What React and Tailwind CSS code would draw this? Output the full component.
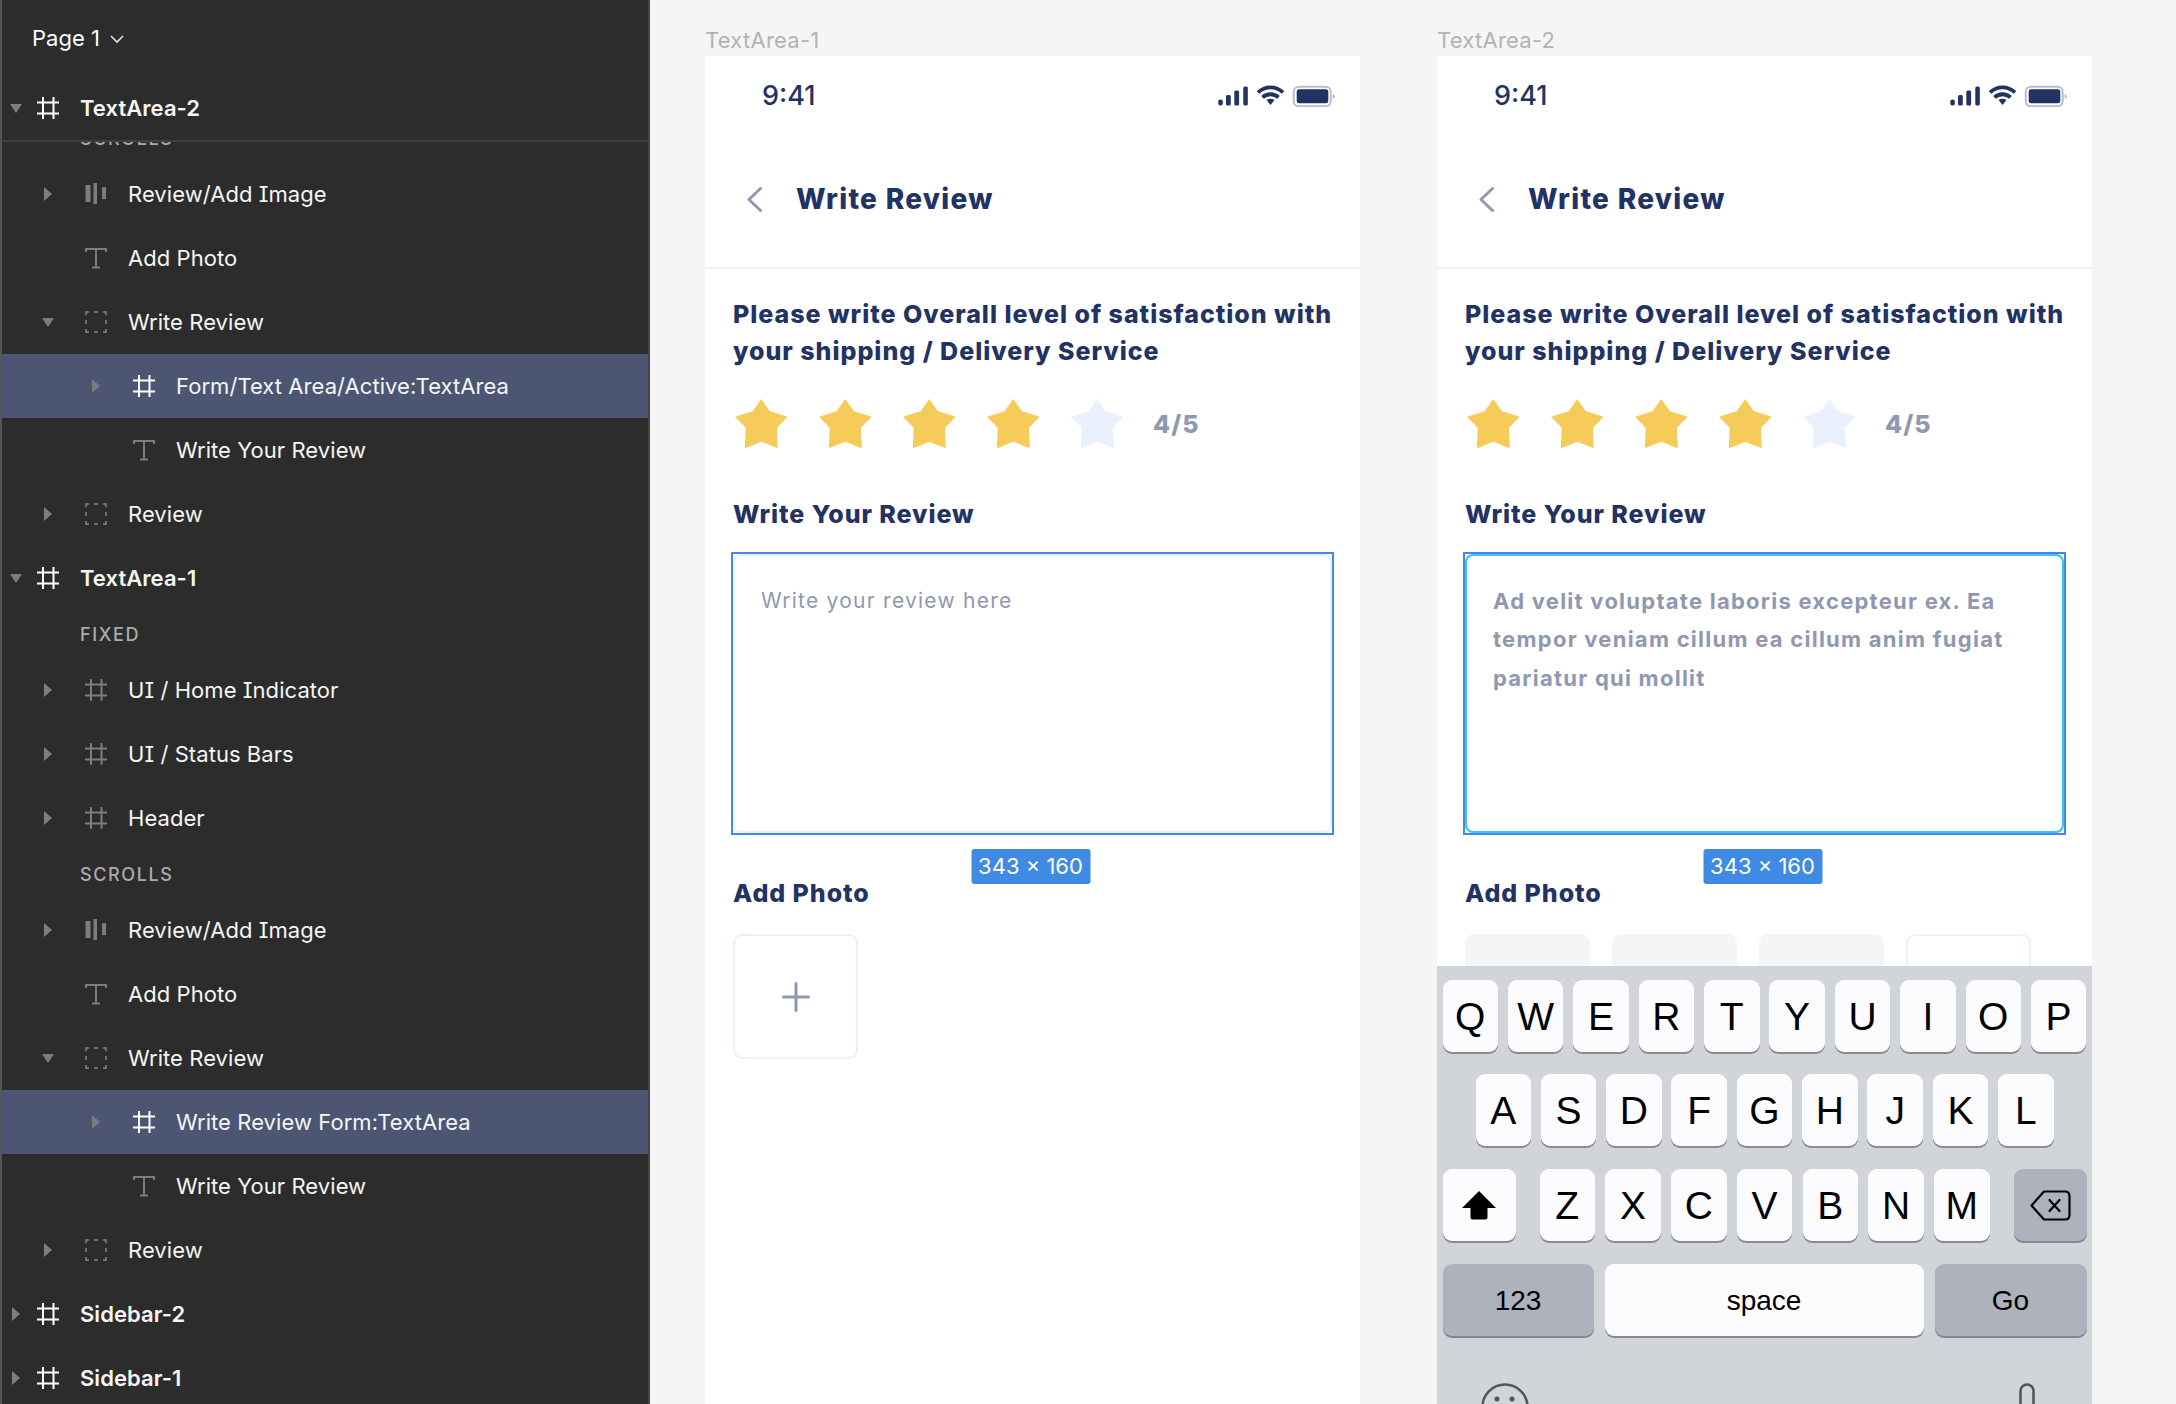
import React from "react";

const inter = "[font-family:Inter,'Noto_Sans',sans-serif]";

function Arrow({ dir }) {
  if (dir === "down")
    return (
      <svg width="12" height="9" viewBox="0 0 12 9" className="text-[#7d7d7d]">
        <path d="M0 0H12L6 9Z" fill="currentColor" />
      </svg>
    );
  if (dir === "right")
    return (
      <svg width="8" height="14" viewBox="0 0 8 14" className="text-[#7d7d7d]">
        <path d="M0 0L8 7L0 14Z" fill="currentColor" />
      </svg>
    );
  return null;
}

function Icon({ type, className }) {
  if (type === "hash")
    return (
      <svg width="22" height="24" viewBox="0 0 22 24" fill="none" stroke="currentColor" strokeWidth="2" className={className}>
        <path d="M6 1V23M16.500 1V23M0 6.500H22M0 17.500H22" />
      </svg>
    );
  if (type === "text")
    return (
      <svg width="22" height="22" viewBox="0 0 22 22" fill="none" stroke="currentColor" strokeWidth="2" className={className}>
        <path d="M1 5V2H21V5M11 2V20M7 20.500H15" />
      </svg>
    );
  if (type === "group")
    return (
      <svg width="22" height="22" viewBox="0 0 22 22" fill="none" stroke="#6e6e6e" strokeWidth="2" className={className}>
        <path d="M1 4V1H4M9 1H13M18 1H21V4M21 9V13M21 18V21H18M13 21H9M4 21H1V18M1 13V9" />
      </svg>
    );
  return (
    <svg width="22" height="22" viewBox="0 0 22 22" fill="currentColor" className={className}>
      <rect x="0.500" y="2" width="5" height="17" />
      <rect x="8.500" y="0" width="3.500" height="21" />
      <rect x="17" y="4" width="4" height="12" />
    </svg>
  );
}

function Row({ level, arrow, icon, label, selected, bold }) {
  const indent = level === 0 ? "w-[28px]" : level === 1 ? "ml-[30px] w-[32px]" : "ml-[78px] w-[32px]";
  const iconGap = level === 0 ? "ml-[7px]" : "ml-[21px]";
  const iconColor = selected || level === 0 ? "text-white" : "text-[#7d7d7d]";
  return (
    <div className={`flex h-[64px] shrink-0 items-center ${selected ? "bg-[#4c5672]" : ""}`}>
      <div className={`flex shrink-0 items-center justify-center ${indent}`}>
        <Arrow dir={arrow} />
      </div>
      <Icon type={icon} className={`shrink-0 ${iconGap} ${iconColor}`} />
      <span className={`ml-[21px] whitespace-nowrap text-[22px] tracking-[0.06px] text-[#f5f5f5] [font-feature-settings:'cv08'] ${bold ? "font-semibold" : "font-normal"}`}>
        {label}
      </span>
    </div>
  );
}

function SectionLabel({ children }) {
  return (
    <div className="flex h-[48px] shrink-0 items-center pl-[78px] text-[18px] font-medium tracking-[1.6px] text-[#ababab]">
      {children}
    </div>
  );
}

function ArtboardRows({ selectedName }) {
  return (
    <>
      <Row level={1} arrow="right" icon="auto" label="Review/Add Image" />
      <Row level={1} icon="text" label="Add Photo" />
      <Row level={1} arrow="down" icon="group" label="Write Review" />
      <Row level={2} arrow="right" icon="hash" label={selectedName} selected />
      <Row level={2} icon="text" label="Write Your Review" />
      <Row level={1} arrow="right" icon="group" label="Review" />
    </>
  );
}

function Sidebar() {
  return (
    <aside className={`flex h-full w-[650px] shrink-0 flex-col border-x-2 border-l-[#555555] border-r-[#444444] bg-[#2c2c2c] ${inter}`}>
      <div className="flex h-[76px] shrink-0 items-center pl-[30px] text-[22px] text-white">
        Page 1
        <svg width="14" height="9" viewBox="0 0 14 9" fill="none" stroke="#e0e0e0" strokeWidth="1.600" className="ml-[10px] mt-[2px]">
          <path d="M1 1L7 7L13 1" />
        </svg>
      </div>
      <div className="shrink-0 border-b-2 border-[#3f3f3f]">
        <Row level={0} arrow="down" icon="hash" label="TextArea-2" bold />
      </div>
      <div className="flex min-h-0 flex-1 flex-col overflow-hidden">
        <div className="-mt-[28px] shrink-0">
          <SectionLabel>SCROLLS</SectionLabel>
        </div>
        <ArtboardRows selectedName="Form/Text Area/Active:TextArea" />
        <Row level={0} arrow="down" icon="hash" label="TextArea-1" bold />
        <SectionLabel>FIXED</SectionLabel>
        <Row level={1} arrow="right" icon="hash" label="UI / Home Indicator" />
        <Row level={1} arrow="right" icon="hash" label="UI / Status Bars" />
        <Row level={1} arrow="right" icon="hash" label="Header" />
        <SectionLabel>SCROLLS</SectionLabel>
        <ArtboardRows selectedName="Write Review Form:TextArea" />
        <Row level={0} arrow="right" icon="hash" label="Sidebar-2" bold />
        <Row level={0} arrow="right" icon="hash" label="Sidebar-1" bold />
      </div>
    </aside>
  );
}

function StatusIcons() {
  return (
    <svg width="117" height="22" viewBox="0 0 117 22" fill="none">
      <g fill="#223263">
        <rect x="0.300" y="14.500" width="4.500" height="6" rx="2" />
        <rect x="8" y="10" width="4.800" height="10.500" rx="1.500" />
        <rect x="16.300" y="5.500" width="4.800" height="15" rx="1.500" />
        <rect x="25.300" y="1.500" width="4.500" height="19" rx="1.500" />
        <path d="M48.500 15Q52.500 12.500 56.500 15L52.500 20Z" />
      </g>
      <g stroke="#223263" strokeWidth="3.800">
        <path d="M40 7.500A18 18 0 0 1 65 7.500" />
        <path d="M44.500 12.300A12 12 0 0 1 60.500 12.300" />
      </g>
      <rect x="75.700" y="1.700" width="37" height="19.600" rx="5" stroke="#b9bdd0" strokeWidth="2" />
      <rect x="78.700" y="4.300" width="31.600" height="14" rx="2.500" fill="#223263" />
      <path d="M114.700 9C116 9.500 117 10.500 117 11.500S116 13.500 114.700 14Z" fill="#b9bdd0" />
    </svg>
  );
}

const STAR = "26.300,0 35,12.300 52.700,17.700 42,28.700 42.800,49.300 26.300,42.700 9.800,49.300 10.700,28.700 0,17.700 17.600,12.300";

function Star({ on }) {
  return (
    <svg width="53" height="50" viewBox="0 0 53 50" className="shrink-0">
      <polygon points={STAR} fill={on ? "#f6cb5a" : "#ebf0ff"} strokeLinejoin="round" />
    </svg>
  );
}

const bodyFont = "[font-family:Inter,sans-serif]";

function Phone({ name, keyboard }) {
  return (
    <div className="flex h-full w-[655px] shrink-0 flex-col">
      <div className={`flex h-[31px] shrink-0 items-center text-[22px] tracking-[0.25px] text-[#b3b3b3] ${inter}`}>{name}</div>
      <div className={`relative min-h-0 flex-1 overflow-hidden bg-white ${bodyFont}`}>
        <div className="flex h-[80px] items-center justify-between pl-[57px] pr-[25px]">
          <span className="text-[27px] font-medium text-[#223263]">9:41</span>
          <StatusIcons />
        </div>
        <div className="flex h-[133px] items-center border-b-2 border-[#ebf0ff] pb-[5px] pl-[42px]">
          <svg width="15" height="25" viewBox="0 0 15 25" fill="none" stroke="#9098b1" strokeWidth="3" strokeLinecap="round" strokeLinejoin="round">
            <path d="M13.500 1.500L2 12.500L13.500 23.500" />
          </svg>
          <span className="ml-[34px] text-[28px] font-extrabold tracking-[1.3px] text-[#223263]">Write Review</span>
        </div>
        <div className="flex flex-col px-[28px]">
          <p className="mt-[27px] whitespace-nowrap text-[25px] font-extrabold leading-[37px] tracking-[0.98px] text-[#223263]">
            Please write Overall level of satisfaction with
            <br />
            your shipping / Delivery Service
          </p>
          <div className="mt-[28px] flex h-[51px] items-center gap-[31px] pl-[2px]">
            <Star on />
            <Star on />
            <Star on />
            <Star on />
            <Star />
            <span className="-ml-[2px] pt-[2px] text-[25px] font-extrabold tracking-[1px] text-[#9098b1]">4/5</span>
          </div>
          <div className="mt-[47px] h-[36px] text-[25px] font-extrabold leading-[36px] tracking-[0.93px] text-[#223263]">Write Your Review</div>
          <div className="relative mt-[22px] h-[279px] w-[599px] rounded-[8px] border-2 border-[#ebf0ff] bg-white px-[26px] pt-[26px]">
            {keyboard ? (
              <p className="whitespace-nowrap text-[22px] font-bold leading-[38.400px] tracking-[1.25px] text-[#9098b1]">
                Ad velit voluptate laboris excepteur ex. Ea
                <br />
                tempor veniam cillum ea cillum anim fugiat
                <br />
                pariatur qui mollit
              </p>
            ) : (
              <p className="text-[21px] font-normal leading-[38.400px] tracking-[1.25px] text-[#9098b1]">Write your review here</p>
            )}
            {keyboard && <div className="absolute -inset-[2px] rounded-[8px] border-2 border-[#40bfff]" />}
            <div className="absolute -inset-[4px] border-2 border-[#3f8ae8]" />
            <div className="absolute left-1/2 top-[293px] -ml-[2px] flex h-[35px] w-[119px] -translate-x-1/2 items-center justify-center rounded-[3px] bg-[#3f8ae2] text-[22px] text-white">
              343 × 160
            </div>
          </div>
          <div className="mt-[42px] h-[36px] text-[25px] font-extrabold leading-[36px] tracking-[0.95px] text-[#223263]">Add Photo</div>
          <div className="mt-[23px] flex gap-[22px]">
            {keyboard && (
              <>
                <div className="h-[125px] w-[125px] rounded-[9px] bg-[#f5f5f5]" />
                <div className="h-[125px] w-[125px] rounded-[9px] bg-[#f5f5f5]" />
                <div className="h-[125px] w-[125px] rounded-[9px] bg-[#f5f5f5]" />
              </>
            )}
            <div className="flex h-[125px] w-[125px] items-center justify-center rounded-[9px] border-2 border-[#ebf0ff]">
              <svg width="28" height="30" viewBox="0 0 28 30" fill="none" stroke="#9098b1" strokeWidth="3" strokeLinecap="round">
                <path d="M14 1.500V28.500M1.500 15H26.500" />
              </svg>
            </div>
          </div>
        </div>
        {keyboard && <Keyboard />}
      </div>
    </div>
  );
}

const keyCls =
  "flex h-[72px] items-center justify-center rounded-[9px] bg-[#fcfcfe] text-[39px] leading-none text-black shadow-[0_2px_0_#8a8b8e]";
const darkCls =
  "flex h-[72px] items-center justify-center rounded-[9px] bg-[#adb2bc] text-black shadow-[0_2px_0_#85878d]";

function Key({ k }) {
  return <div className={`w-[55.500px] ${keyCls}`}>{k}</div>;
}

function Keyboard() {
  return (
    <div className="absolute inset-x-0 top-[910px] bottom-0 flex flex-col bg-[#d1d4d9] pt-[14px] [font-family:'Liberation_Sans',Arial,sans-serif]">
      <div className="flex justify-between px-[5.500px]">
        {"QWERTYUIOP".split("").map((k) => (
          <Key key={k} k={k} />
        ))}
      </div>
      <div className="mt-[22.300px] flex justify-between px-[38.500px]">
        {"ASDFGHJKL".split("").map((k) => (
          <Key key={k} k={k} />
        ))}
      </div>
      <div className="mt-[23px] flex items-center justify-between px-[5.500px]">
        <div className={`w-[73px] ${keyCls}`}>
          <svg width="34" height="29" viewBox="0 0 34 29" fill="#000">
            <path d="M17 0L34 17H25.500V26Q25.500 28.500 23 28.500H11Q8.500 28.500 8.500 26V17H0Z" />
          </svg>
        </div>
        <div className="flex w-[450px] justify-between">
          {"ZXCVBNM".split("").map((k) => (
            <Key key={k} k={k} />
          ))}
        </div>
        <div className={`w-[73px] ${darkCls}`}>
          <svg width="41" height="31" viewBox="0 0 41 31" fill="none" stroke="#000" strokeWidth="2.200" strokeLinejoin="round" strokeLinecap="round">
            <path d="M14 1.500H35Q39.500 1.500 39.500 6V25Q39.500 29.500 35 29.500H14L1.500 15.500Z" />
            <path d="M19.500 10L29.500 21M29.500 10L19.500 21" />
          </svg>
        </div>
      </div>
      <div className="mt-[22.300px] flex gap-[11px] px-[5.500px]">
        <div className={`w-[151px] pt-[2px] text-[28px] ${darkCls}`}>123</div>
        <div className={`flex-1 pt-[2px] ${keyCls} !text-[28px]`}>space</div>
        <div className={`w-[152px] pt-[2px] text-[28px] ${darkCls}`}>Go</div>
      </div>
      <div className="mt-[47px] flex justify-between pl-[44px] pr-[57px]">
        <svg width="48" height="48" viewBox="0 0 48 48" fill="none" stroke="#50555c" strokeWidth="2.500">
          <circle cx="24" cy="24" r="22.500" />
          <circle cx="16" cy="16" r="2.500" fill="#50555c" stroke="none" />
          <circle cx="31" cy="16" r="2.500" fill="#50555c" stroke="none" />
        </svg>
        <svg width="16" height="40" viewBox="0 0 16 40" fill="none" stroke="#50555c" strokeWidth="2.500">
          <rect x="1.500" y="1.500" width="13" height="36" rx="6.500" />
        </svg>
      </div>
    </div>
  );
}

export default function App() {
  return (
    <div className="flex h-[1404px] w-[2176px] overflow-hidden bg-[#f5f5f5]">
      <Sidebar />
      <div className="flex h-full min-w-0 flex-1 gap-[77px] pl-[55px] pt-[25px]">
        <Phone name="TextArea-1" />
        <Phone name="TextArea-2" keyboard />
      </div>
    </div>
  );
}
